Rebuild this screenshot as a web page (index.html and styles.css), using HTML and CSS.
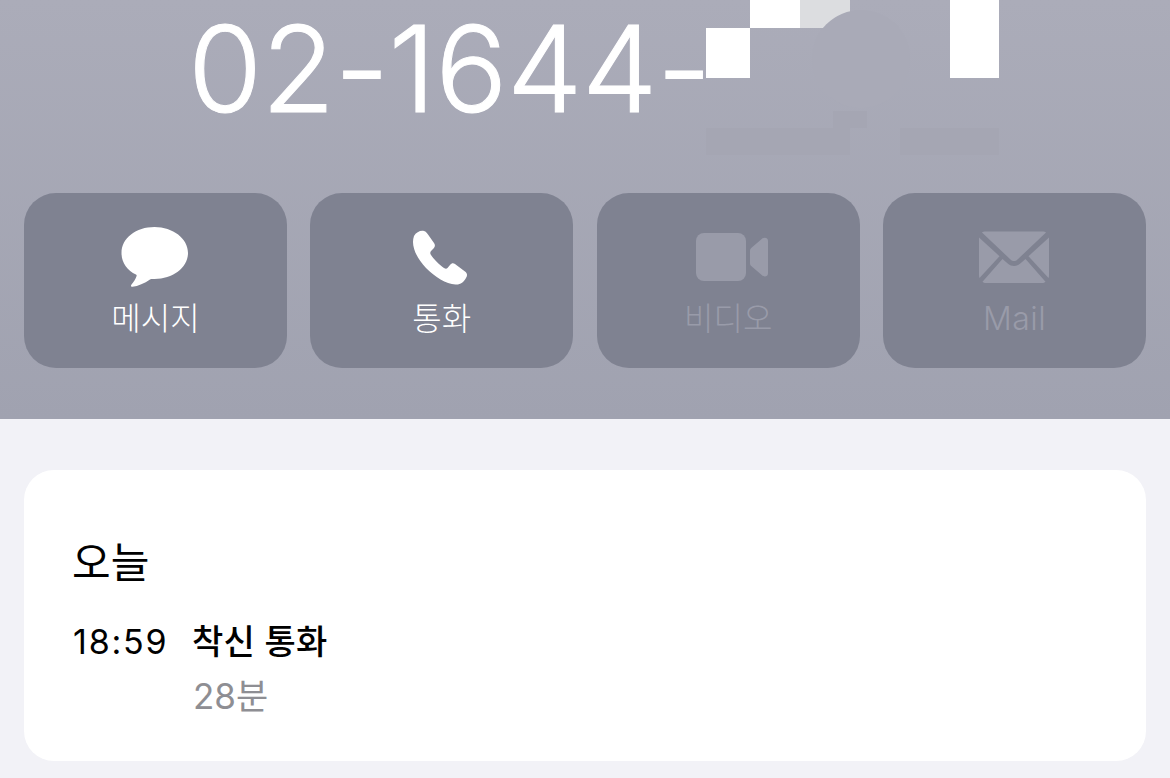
FILE: index.html
```html
<!DOCTYPE html>
<html lang="ko">
<head>
    <meta charset="UTF-8">
    <meta name="viewport" content="width=device-width, initial-scale=1.0">
    <title>02-1644</title>
    <link rel="stylesheet" href="styles.css">
</head>
<body>
    <header class="hero">
        <div class="number-row">
            <h1 class="number">02-1644-</h1>
            <span class="tile tile-a"></span>
            <span class="tile tile-b"></span>
            <span class="tile tile-c"></span>
            <span class="tile tile-d"></span>
            <span class="smudge"></span>
            <span class="shade shade-a"></span>
            <span class="shade shade-b"></span>
            <span class="shade shade-c"></span>
        </div>
        <div class="actions">
            <div class="action">
                <svg class="icon icon-message" width="68" height="62" viewBox="0 0 68 62">
                    <path fill="#fff" d="M33.500 1C15 1 .5 12 .5 27c0 9.800 5.800 17.500 14.500 21.500.6.3.8.8.6 1.400-1 3-2.900 6-5.100 8.600-1 1.200-.5 2.500 1 2.300 5.500-.6 12-3.500 17.500-7.300.8-.5 1.400-.6 2.300-.6h2.200c18.500 0 33.500-11.500 33.500-25.900S52 1 33.500 1z"/>
                </svg>
                <span class="label">메시지</span>
            </div>
            <div class="action">
                <svg class="icon icon-phone" width="80" height="75" viewBox="0 0 80 75">
                    <path fill="#fff" d="M14 16C16 12 21 10 24 11c2 .5 3 2 4 3.500L34 23c1.500 2 1 4-.5 5.500L31 31c-1 1.200-1 2.500 0 4 3 4.500 8.500 10 13 13 1.500 1 2.500 1 3.500 0l2.500-3c1.500-2 3.500-2 5-1l10 7.500c2.500 2 2.500 4 1 6.500-2 4-6 7-10.500 6.500C46 64 35 57 26 48 18 39.500 13 30 13 22c0-2 .3-4 1-6z"/>
                </svg>
                <span class="label">통화</span>
            </div>
            <div class="action action-off">
                <svg class="icon icon-video" width="72" height="48" viewBox="0 0 72 48">
                    <rect fill="#999ba9" x="0" y="0" width="50" height="48" rx="8"/>
                    <path fill="#999ba9" d="M54 17.500c0-1 .4-1.900 1.200-2.600L66 5.800c2.300-2 6-1.200 6 2v32.400c0 3.300-3.700 4.100-6 2.100L55.200 33c-.8-.7-1.200-1.600-1.200-2.600z"/>
                </svg>
                <span class="label">비디오</span>
            </div>
            <div class="action action-off">
                <svg class="icon icon-mail" width="72" height="54" viewBox="0 0 72 54">
                    <path fill="#999ba9" d="M4 1.500C4.700.7 6 .5 7.500.5h57c1.500 0 2.800.2 3.500 1L39.500 28.500c-2.100 2-4.900 2-7 0z"/>
                    <path fill="#999ba9" d="M1 6.500l20.500 18.700L1.500 47c-.4-.8-.5-1.800-.5-3V9.500c0-1.200 0-2.200 0-3z"/>
                    <path fill="#999ba9" d="M71 6.500c0 .8 0 1.800 0 3V44c0 1.200-.1 2.200-.5 3L50.500 25.200z"/>
                    <path fill="#999ba9" d="M4.500 50.800L24.500 28l5.500 4.800c3.500 3 8.500 3 12 0l5.500-4.800 20 22.800c-.8.900-2 1.200-3.500 1.200H8c-1.500 0-2.700-.3-3.500-1.200z"/>
                </svg>
                <span class="label label-latin">Mail</span>
            </div>
        </div>
    </header>

    <main class="content">
        <section class="card">
            <h2 class="day">오늘</h2>
            <div class="call">
                <span class="call-time">18:59</span>
                <div class="call-info">
                    <div class="call-type">착신 통화</div>
                    <div class="call-length">28분</div>
                </div>
            </div>
        </section>
    </main>
</body>
</html>
```

FILE: styles.css
```css
html, body {
    margin: 0;
    padding: 0;
}
body {
    width: 1170px;
    height: 778px;
    overflow: hidden;
    font-family: Inter, "Noto Sans CJK KR", sans-serif;
    background-color: #f2f2f7;
}
.hero {
    height: 419px;
    background: linear-gradient(#abacb9, #a0a2b0);
}
.number-row {
    position: relative;
    height: 193px;
    padding-left: 188px;
    box-sizing: border-box;
}
.number {
    margin: 0;
    font-size: 120px;
    font-weight: 300;
    -webkit-text-stroke: 1px #fff;
    letter-spacing: -0.5px;
    line-height: 138px;
    color: #fff;
    white-space: nowrap;
}
/* number is blurred out in the shot */
.tile {
    position: absolute;
    background: #fff;
}
.tile-a { left: 706px; top: 28px; width: 44px; height: 50px; }
.tile-b { left: 750px; top: 0; width: 50px; height: 28px; }
.tile-c { left: 800px; top: 0; width: 50px; height: 28px; background: #dcdde0; }
.tile-d { left: 950px; top: 0; width: 49px; height: 78px; }
.smudge {
    position: absolute;
    left: 812px;
    top: 10px;
    width: 98px;
    height: 98px;
    border-radius: 50%;
    background: #a9aab7;
}
.shade {
    position: absolute;
    background: #a5a6b3;
}
.shade-a { left: 706px; top: 128px; width: 144px; height: 27px; }
.shade-b { left: 900px; top: 128px; width: 99px; height: 27px; }
.shade-c { left: 833px; top: 111px; width: 34px; height: 17px; }
.actions {
    display: flex;
    gap: 23.500px;
    padding: 0 24px;
}
.action {
    flex: 1;
    height: 175px;
    border-radius: 32px;
    background: #7f8291;
    display: flex;
    flex-direction: column;
    align-items: center;
    color: #fff;
}
.icon-message { margin-top: 33px; }
.icon-phone { margin-top: 27px; margin-left: -3px; }
.icon-video { margin-top: 40px; margin-left: 7px; }
.icon-mail { margin-top: 38px; margin-left: -2px; }
.label {
    margin-top: auto;
    margin-bottom: 29px;
    font-size: 32px;
    line-height: 40px;
    font-weight: 300;
    white-space: nowrap;
}
.label-latin {
    letter-spacing: 0.5px;
}
.action-off .label {
    color: #999ba9;
}
.content {
    padding: 51px 24px 0;
}
.card {
    height: 291px;
    box-sizing: border-box;
    padding: 68px 48px 0;
    border-radius: 30px;
    background: #fff;
    color: #000;
}
.day {
    margin: 0;
    font-size: 42px;
    line-height: 50px;
    font-weight: 400;
}
.call {
    display: flex;
    margin-top: 31px;
    font-size: 34px;
    line-height: 46px;
}
.call-time {
    width: 119px;
    padding-left: 1px;
    font-weight: 400;
    letter-spacing: 1.800px;
}
.call-type {
    font-weight: 500;
    letter-spacing: 0.300px;
}
.call-length {
    margin-top: 8px;
    padding-left: 1px;
    font-size: 35px;
    color: #8e8e93;
}
```
